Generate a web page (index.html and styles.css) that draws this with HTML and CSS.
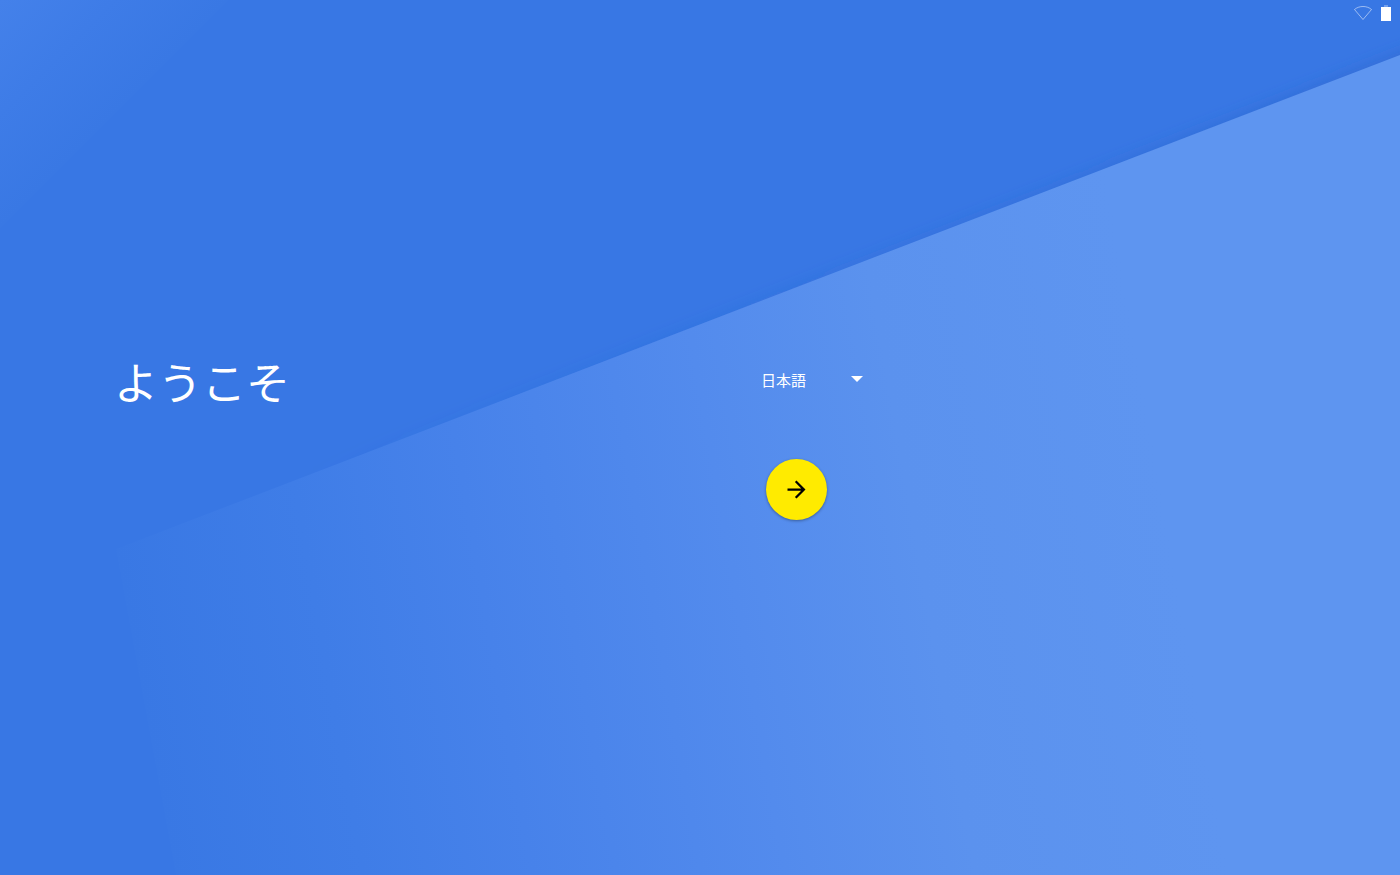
FILE: index.html
```
<!DOCTYPE html>
<html lang="ja">
<head>
<meta charset="utf-8">
<meta name="viewport" content="width=device-width, initial-scale=1">
<title>ようこそ</title>
<link rel="stylesheet" href="styles.css">
</head>
<body>
<div class="screen">
  <svg class="backdrop" viewBox="0 0 1400 875" preserveAspectRatio="none" aria-hidden="true">
    <defs>
      <linearGradient id="sheet" gradientUnits="userSpaceOnUse" x1="116" y1="549" x2="1140" y2="369">
        <stop offset="0" stop-color="#3978e4"/>
        <stop offset="0.18" stop-color="#3f7de7"/>
        <stop offset="0.34" stop-color="#4782ea"/>
        <stop offset="0.58" stop-color="#538bed"/>
        <stop offset="0.76" stop-color="#5b92ee"/>
        <stop offset="1" stop-color="#5e95f0"/>
      </linearGradient>
      <linearGradient id="corner" gradientUnits="userSpaceOnUse" x1="0" y1="0" x2="114" y2="114">
        <stop offset="0" stop-color="#4481ea"/>
        <stop offset="0.5" stop-color="#3e7ce7"/>
        <stop offset="1" stop-color="#3978e4"/>
      </linearGradient>
      <linearGradient id="shade" gradientUnits="userSpaceOnUse" x1="300" y1="0" x2="1400" y2="0">
        <stop offset="0" stop-color="#2c62c8" stop-opacity="0"/>
        <stop offset="0.6" stop-color="#2c62c8" stop-opacity="0.3"/>
        <stop offset="1" stop-color="#2c62c8" stop-opacity="0.6"/>
      </linearGradient>
      <filter id="soft" x="-10%" y="-10%" width="120%" height="120%">
        <feGaussianBlur stdDeviation="8"/>
      </filter>
    </defs>
    <rect width="1400" height="875" fill="#3877e4"/>
    <path d="M0 0H228L0 228z" fill="url(#corner)"/>
    <path d="M116 549L1500 16V875H176z" fill="url(#shade)" filter="url(#soft)"/>
    <path d="M116 549L1400 55V875H176z" fill="url(#sheet)"/>
  </svg>

  <header class="status">
    <svg class="wifi" viewBox="0 0 20 16" role="img" aria-label="Wi-Fi">
      <path d="M1.500 4.500C6 .500 14 .500 18.500 4.500L10 14.500z"/>
    </svg>
    <svg class="battery" viewBox="0 0 10 16" role="img" aria-label="バッテリー">
      <path d="M3 0h4v2H3z" opacity=".3"/>
      <path d="M0 2h10v14H0z"/>
    </svg>
  </header>

  <main class="welcome">
    <h1 class="title">ようこそ</h1>
    <form class="setup">
      <div class="language">
        <select class="picker" aria-label="言語">
          <option>日本語</option>
        </select>
        <svg class="caret" viewBox="0 0 12 6" aria-hidden="true"><path d="M0 0h12L6 6z"/></svg>
      </div>
      <button class="next" type="button" aria-label="次へ">
        <svg class="arrow" viewBox="0 0 24 24" aria-hidden="true"><path d="M12 4l-1.410 1.410L16.170 11H4v2h12.170l-5.580 5.590L12 20l8-8z"/></svg>
      </button>
    </form>
  </main>
</div>
</body>
</html>
```
FILE: styles.css
```
* {
  box-sizing: border-box;
}

body {
  margin: 0;
  background: #3877e4;
  color: #fff;
  font-family: "Noto Sans CJK JP", sans-serif;
}

.screen {
  position: relative;
  display: flex;
  flex-direction: column;
  min-height: 100vh;
  isolation: isolate;
}

/* Folded paper backdrop behind everything */
.backdrop {
  position: absolute;
  inset: 0;
  z-index: -1;
  width: 100%;
  height: 100%;
}

.status {
  display: flex;
  justify-content: flex-end;
  gap: 8px;
  padding: 5px 9px;
}

.wifi {
  width: 20px;
  height: 16px;
  fill: none;
  stroke: #fff;
  stroke-opacity: 0.5;
}

.battery {
  width: 10px;
  height: 16px;
  fill: #fff;
}

.welcome {
  flex: 1;
  display: grid;
  grid-template-columns: 1fr 1fr;
  align-content: center;
  padding: 0 0 24px 114px;
}

.title {
  margin: 0;
  font-size: 44px;
  font-weight: 400;
  line-height: 48px;
}

.setup {
  display: flex;
  flex-direction: column;
  align-items: flex-start;
  gap: 58px;
}

.language {
  display: grid;
  align-items: center;
  width: 110px;
}

.picker,
.caret {
  grid-area: 1 / 1;
}

.picker {
  appearance: none;
  height: 44px;
  padding: 0 24px 0 4px;
  border: 0;
  background: transparent;
  color: inherit;
  font: 15px "Noto Sans CJK JP", sans-serif;
}

.picker option {
  color: #222;
}

.caret {
  justify-self: end;
  width: 12px;
  height: 6px;
  margin-right: 4px;
  fill: #fff;
  pointer-events: none;
}

.next {
  display: grid;
  place-items: center;
  width: 61px;
  height: 61px;
  margin-left: 9px;
  padding: 0;
  border: 0;
  border-radius: 50%;
  background: #ffeb00;
  box-shadow: 0 1px 3px rgb(0 0 0 / 35%);
  cursor: pointer;
}

.arrow {
  width: 27px;
  height: 27px;
  fill: #000;
}
```
